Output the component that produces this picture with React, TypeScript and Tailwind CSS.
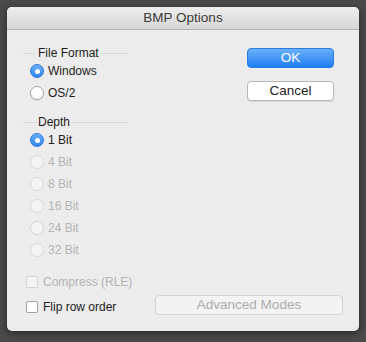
import React from "react";

type RadioProps = { label: string; checked?: boolean; disabled?: boolean };

function Radio({ label, checked, disabled }: RadioProps) {
    return (
        <div className="h-[22px] flex items-center pl-[7px] gap-[4px] whitespace-nowrap">
            {checked ? (
                <span className="w-[14px] h-[14px] rounded-full bg-gradient-to-b from-[#6aaef8] to-[#2f86f2] border border-[#2a78dc] flex items-center justify-center">
                    <span className="w-[5px] h-[5px] rounded-full bg-white"/>
                </span>
            ) : (
                <span className={"w-[14px] h-[14px] rounded-full border " + (disabled ? "bg-[#f4f4f4] border-[#d6d6d6]" : "bg-white border-[#a8a8a8] shadow-[0_1px_1px_rgba(0,0,0,0.08)]")}/>
            )}
            <span className={disabled ? "text-[#b4b4b4]" : "text-[#1c1c1c]"}>{label}</span>
        </div>
    );
}

function Checkbox({ label, disabled }: { label: string; disabled?: boolean }) {
    return (
        <div className="h-[22px] flex items-center pl-[3px] gap-[5px] whitespace-nowrap">
            <span className={"w-[12px] h-[12px] shrink-0 rounded-[2px] border " + (disabled ? "bg-[#f4f4f4] border-[#d4d4d4]" : "bg-white border-[#a4a4a4]")}/>
            <span className={disabled ? "text-[#b4b4b4]" : "text-[#1c1c1c]"}>{label}</span>
        </div>
    );
}

function GroupTitle({ title }: { title: string }) {
    return (
        <div className="h-[14px] flex items-center gap-[2px]">
            <span className="w-[13px] h-px bg-[#d9d9d9]"/>
            <span className="text-[#1c1c1c] leading-none">{title}</span>
            <span className="flex-1 h-px bg-[#d9d9d9]"/>
        </div>
    );
}

function App() {
    return (
        <div className="w-[366px] h-[342px] bg-[#4b4b4b] p-[7px]" style={{ fontFamily: '"Liberation Sans", Arial, sans-serif' }}>
            <div className="w-[352px] h-[324px] rounded-[5px] bg-[#ececec] overflow-hidden shadow-[0_2px_8px_rgba(0,0,0,0.5)] text-[12px]">
                <div className="h-[23px] bg-gradient-to-b from-[#eeeeee] to-[#d6d6d6] border-b border-[#b2b2b2] flex items-center justify-center">
                    <span className="text-[13.5px] text-[#3a3a3a]">BMP Options</span>
                </div>
                <div className="flex">
                    <div className="w-[121px] pl-[16px] pt-[16px]">
                        <GroupTitle title="File Format"/>
                        <Radio label="Windows" checked/>
                        <Radio label="OS/2"/>
                        <div className="mt-[11px]">
                            <GroupTitle title="Depth"/>
                        </div>
                        <Radio label="1 Bit" checked/>
                        <Radio label="4 Bit" disabled/>
                        <Radio label="8 Bit" disabled/>
                        <Radio label="16 Bit" disabled/>
                        <Radio label="24 Bit" disabled/>
                        <Radio label="32 Bit" disabled/>
                        <div className="mt-[10px]">
                            <Checkbox label="Compress (RLE)" disabled/>
                        </div>
                    </div>
                    <div className="ml-auto mr-[25px] pt-[18px] flex flex-col gap-[13px] text-[13.5px]">
                        <button className="w-[87px] h-[20px] rounded-[4px] bg-gradient-to-b from-[#69b0fa] to-[#1b7ef5] border border-[#2a7be0] text-white flex items-center justify-center">OK</button>
                        <button className="w-[87px] h-[20px] rounded-[4px] bg-white border border-[#b8b8b8] shadow-[0_1px_1px_rgba(0,0,0,0.1)] text-[#1c1c1c] flex items-center justify-center">Cancel</button>
                    </div>
                </div>
                <div className="flex items-start mt-[3px] pl-[16px]">
                    <div className="w-[132px]">
                        <Checkbox label="Flip row order"/>
                    </div>
                    <button className="w-[188px] h-[20px] -mt-px rounded-[4px] bg-[#f3f3f3] border border-[#d2d2d2] text-[13.5px] text-[#acacac] flex items-center justify-center">Advanced Modes</button>
                </div>
            </div>
        </div>
    );
}

export default App;
